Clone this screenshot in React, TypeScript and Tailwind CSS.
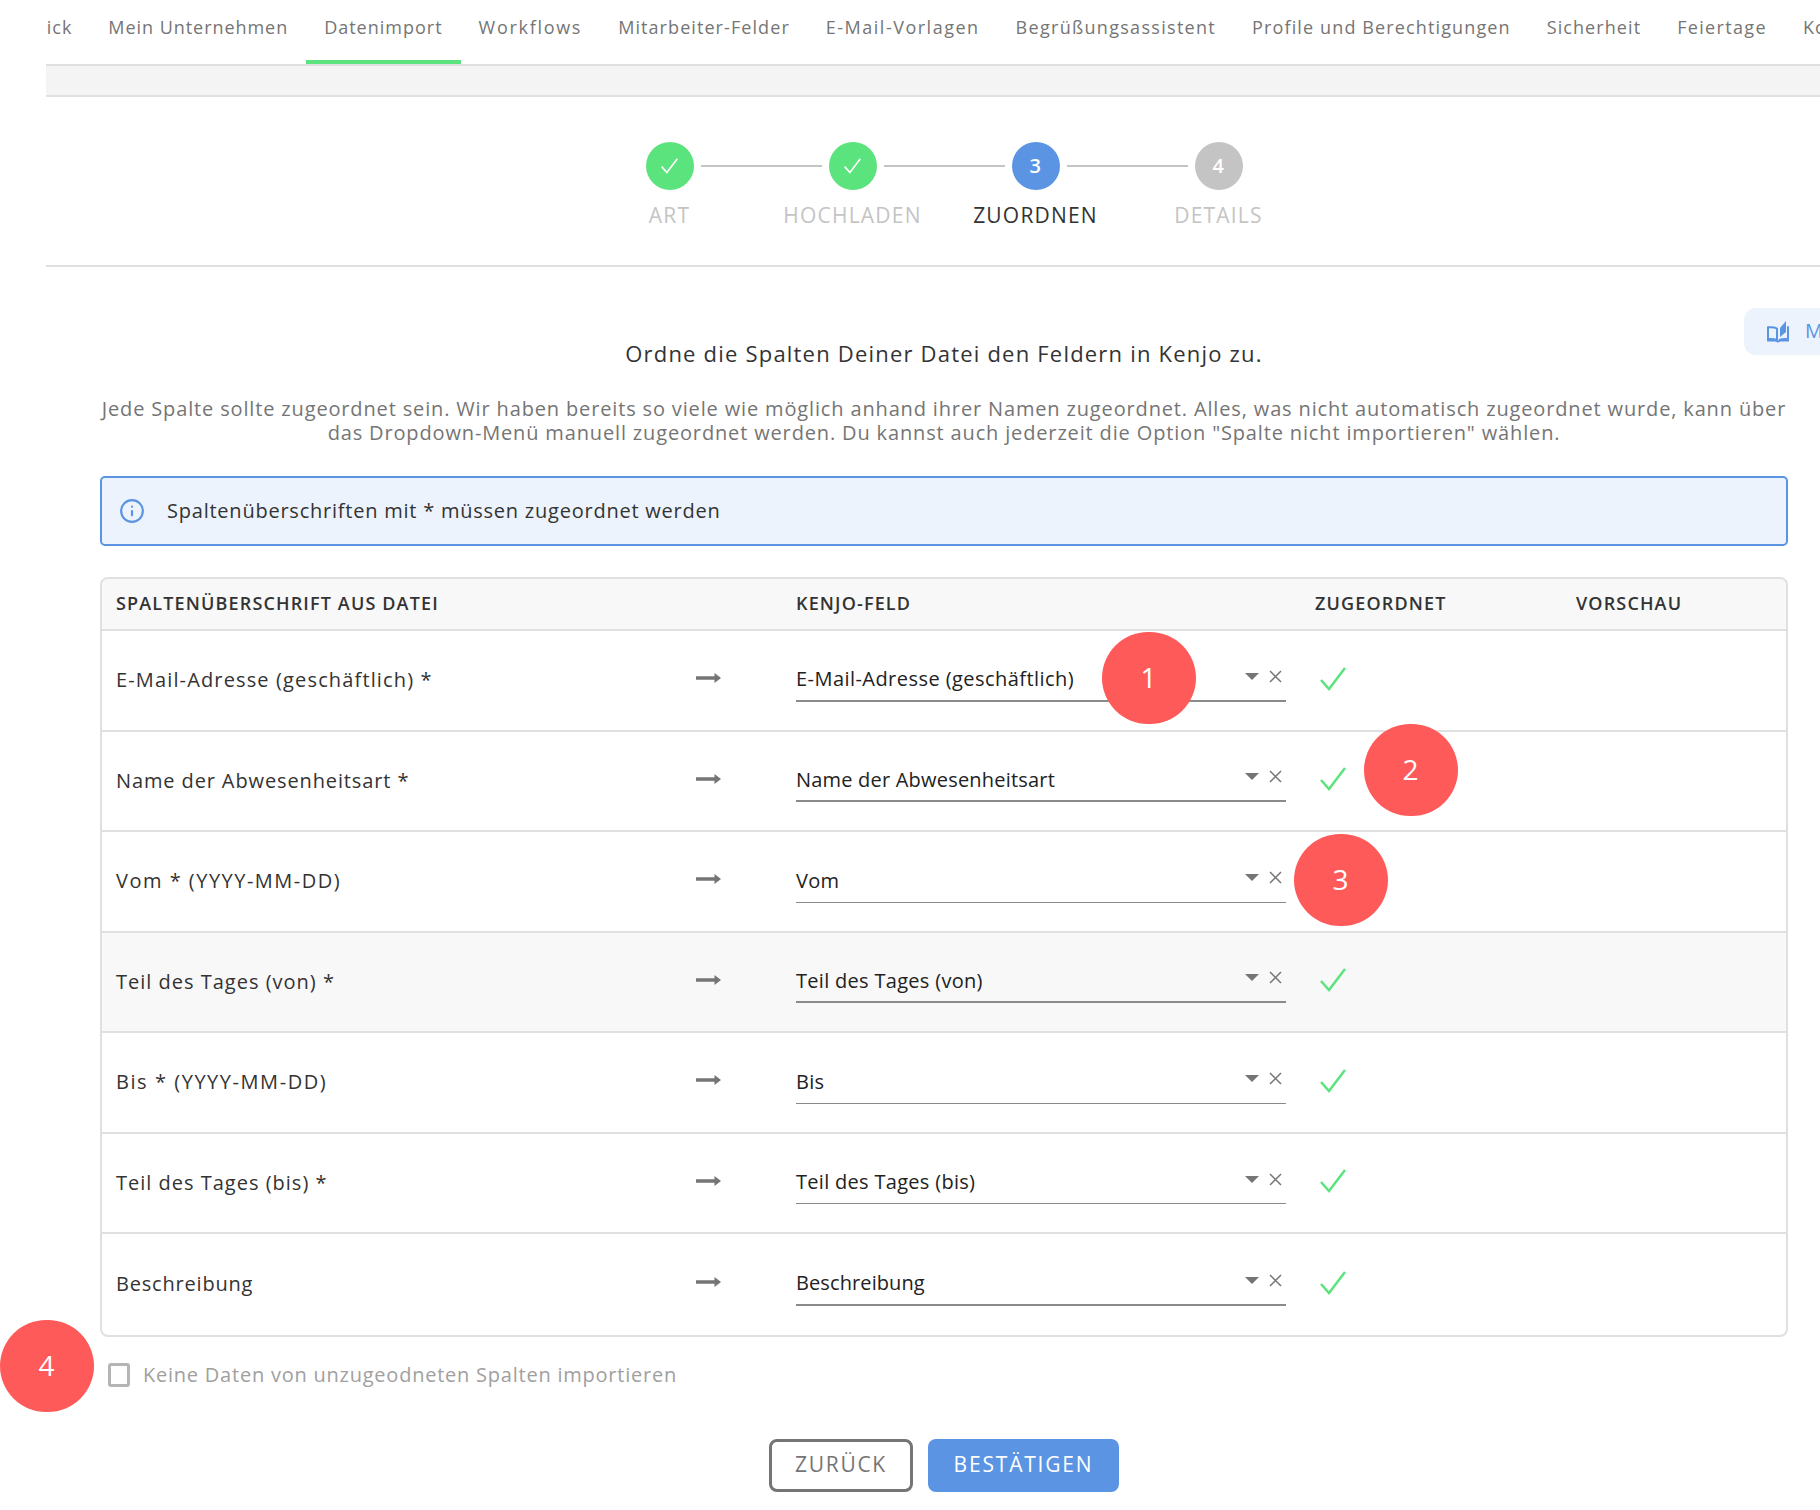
import React from 'react';
import { Info } from 'lucide-react';

const tabs = [
  { name: 'Überblick', ls: 'tracking-[0.95px]' },
  { name: 'Mein Unternehmen', ls: 'tracking-[0.95px]' },
  { name: 'Datenimport', ls: 'tracking-[1px]' },
  { name: 'Workflows', ls: 'tracking-[1.7px]' },
  { name: 'Mitarbeiter-Felder', ls: 'tracking-[1.08px]' },
  { name: 'E-Mail-Vorlagen', ls: 'tracking-[1.5px]' },
  { name: 'Begrüßungsassistent', ls: 'tracking-[1.3px]' },
  { name: 'Profile und Berechtigungen', ls: 'tracking-[1.13px]' },
  { name: 'Sicherheit', ls: 'tracking-[1.07px]' },
  { name: 'Feiertage', ls: 'tracking-[1.34px]' },
  { name: 'Kontakte', ls: 'tracking-[1px]' },
];

const steps = [
  { label: 'ART', state: 'done' },
  { label: 'HOCHLADEN', state: 'done' },
  { label: 'ZUORDNEN', state: 'current', num: 3 },
  { label: 'DETAILS', state: 'todo', num: 4 },
];

const rows = [
  { label: 'E-Mail-Adresse (geschäftlich) *', labelLs: 'tracking-[1.14px]', value: 'E-Mail-Adresse (geschäftlich)', valueLs: 'tracking-[0.45px]', ok: true, line: 'border-b-2' },
  { label: 'Name der Abwesenheitsart *', labelLs: 'tracking-[0.88px]', value: 'Name der Abwesenheitsart', valueLs: 'tracking-[0.2px]', ok: true, line: 'border-b-2' },
  { label: 'Vom * (YYYY-MM-DD)', labelLs: 'tracking-[1.49px]', value: 'Vom', valueLs: 'tracking-[0.3px]', ok: false, line: 'border-b' },
  { label: 'Teil des Tages (von) *', labelLs: 'tracking-[1px]', value: 'Teil des Tages (von)', valueLs: 'tracking-[0.3px]', ok: true, line: 'border-b-2', hover: true },
  { label: 'Bis * (YYYY-MM-DD)', labelLs: 'tracking-[1.55px]', value: 'Bis', valueLs: 'tracking-[0.3px]', ok: true, line: 'border-b' },
  { label: 'Teil des Tages (bis) *', labelLs: 'tracking-[1px]', value: 'Teil des Tages (bis)', valueLs: 'tracking-[0.3px]', ok: true, line: 'border-b' },
  { label: 'Beschreibung', labelLs: 'tracking-[0.8px]', value: 'Beschreibung', valueLs: 'tracking-[0.1px]', ok: true, line: 'border-b-2' },
];

function Arrow() {
  return (
    <svg width="25" height="12" viewBox="0 0 25 12" fill="#757575">
      <path d="M0 4.3h18.5V1l6.5 5-6.5 5V7.7H0z" />
    </svg>
  );
}

function Tick({ className }: { className: string }) {
  return (
    <svg className={className} viewBox="0 0 26 24" fill="none" stroke="currentColor" strokeWidth="2.5">
      <path d="M1 13l8 9L25 1" />
    </svg>
  );
}

function BookIcon() {
  return (
    <svg className="mb-[2px]" width="24" height="24" viewBox="0 0 24 24" fill="none" stroke="currentColor" strokeWidth="2">
      <path d="M11 9.5C9 8.3 5.5 8 2 8.3V20c3.5-.3 7 0 9 1.2zM21 8.3h1V20c-3.5-.3-7 0-9 1.2" />
      <path d="M1 21.5h8.5c1 0 1.5 1 2.5 1s1.5-1 2.5-1H23" />
      <path d="M14 18V9l6-7v11z" fill="currentColor" stroke="none" />
    </svg>
  );
}

function Marker({ n, className }: { n: number; className: string }) {
  return (
    <div className={`absolute flex h-[92px] w-[94px] items-center justify-center rounded-full bg-[#ff5a5a] pb-[2px] text-[28px] text-white ${className}`}>
      {n}
    </div>
  );
}

export default function App() {
  return (
    <div className="relative h-[1510px] overflow-hidden bg-white pl-[46px] font-['Open_Sans',sans-serif] tracking-[0.77px] text-[#333]">
      {/* Tabs */}
      <div className="flex h-[66px] overflow-hidden border-b-2 border-[#e0e0e0]">
        <div className="ml-[-80px] flex shrink-0">
          {tabs.map((t) => (
            <div
              key={t.name}
              className={`shrink-0 border-b-4 px-[18px] pt-[15px] text-[18px] leading-[24px] text-[#757575] ${t.ls} ${t.name === 'Datenimport' ? 'border-[#5be37d]' : 'border-transparent'}`}
            >
              {t.name}
            </div>
          ))}
        </div>
      </div>
      <div className="h-[31px] border-b-2 border-[#e0e0e0] bg-[#f4f4f4]" />

      {/* Stepper */}
      <div className="flex h-[170px] justify-center border-b-2 border-[#e0e0e0] pl-[22px] pt-[45px]">
        {steps.map((s, i) => (
          <React.Fragment key={s.label}>
            <div className="flex w-[48px] flex-col items-center">
              <div
                className={`flex h-[48px] w-[48px] shrink-0 items-center justify-center rounded-full text-[20px] font-semibold text-white ${s.state === 'done' ? 'bg-[#5be37d]' : s.state === 'current' ? 'bg-[#5a94e3]' : 'bg-[#c4c4c4]'}`}
              >
                {s.state === 'done' ? <Tick className="h-[16px] w-[17px]" /> : s.num}
              </div>
              <div className={`mt-[12px] whitespace-nowrap text-[21px] leading-[26px] tracking-[1.2px] ${s.state === 'current' ? 'text-[#333]' : 'text-[#c4c4c4]'}`}>
                {s.label}
              </div>
            </div>
            {i < steps.length - 1 && <div className="mx-[7px] mt-[23px] h-[2px] w-[121px] bg-[#c4c4c4]" />}
          </React.Fragment>
        ))}
      </div>

      {/* Main */}
      <div className="relative pl-[54px] pr-[32px]">
        <div className="absolute right-[-70px] top-[41px] flex h-[47px] w-[146px] items-center rounded-l-[12px] bg-[#ecf3fc] pl-[22px] text-[20px] text-[#5a94e3]">
          <BookIcon />
          <span className="mb-[2px] ml-[15px]">Mehr</span>
        </div>

        <div className="pt-[71px] text-center text-[22px] leading-[30px] tracking-[1.2px] text-[#333]">Ordne die Spalten Deiner Datei den Feldern in Kenjo zu.</div>
        <div className="mt-[29px] -mx-[4px] text-center text-[20px] leading-[24px] tracking-[0.85px] text-[#757575]">
          Jede Spalte sollte zugeordnet sein. Wir haben bereits so viele wie möglich anhand ihrer Namen zugeordnet. Alles, was nicht automatisch zugeordnet wurde, kann über das Dropdown-Menü manuell zugeordnet werden. Du kannst auch jederzeit die Option "Spalte nicht importieren" wählen.
        </div>

        <div className="mt-[31px] flex h-[70px] items-center rounded-[5px] border-2 border-[#5a94e3] bg-[#ecf3fc] pl-[17px] text-[20px]">
          <Info className="h-[26px] w-[26px] text-[#5a94e3]" strokeWidth={2} />
          <span className="ml-[22px]">Spaltenüberschriften mit * müssen zugeordnet werden</span>
        </div>

        {/* Mapping table */}
        <div className="mt-[31px] overflow-hidden rounded-[8px] border-2 border-[#e0e0e0]">
          <div className="grid h-[52px] grid-cols-[579px_101px_490px_29px_261px_1fr] items-center border-b-2 border-[#e0e0e0] bg-[#f8f8f8] pb-[2px] pl-[14px] text-[18px] font-semibold tracking-[1.15px] text-[#333]">
            <div>SPALTENÜBERSCHRIFT AUS DATEI</div>
            <div />
            <div>KENJO-FELD</div>
            <div />
            <div>ZUGEORDNET</div>
            <div>VORSCHAU</div>
          </div>
          {rows.map((r, i) => (
            <div
              key={r.label}
              className={`grid h-[100.5px] grid-cols-[579px_101px_490px_29px_261px_1fr] items-center pl-[14px] text-[20px] ${i < rows.length - 1 ? 'border-b-2 border-[#e0e0e0]' : ''} ${r.hover ? 'bg-[#f8f8f8]' : ''}`}
            >
              <div className={r.labelLs}>{r.label}</div>
              <div className="pb-[4px] pl-[1px]"><Arrow /></div>
              <div className={`flex h-[43px] items-center justify-between border-[#8a8a8a] pr-[4px] text-[#222] ${r.valueLs} ${r.line}`}>
                <span>{r.value}</span>
                <span className="flex items-center gap-[10px] pb-[6px] text-[#757575]">
                  <span className="h-0 w-0 border-x-[7px] border-t-[7px] border-x-transparent border-t-[#757575]" />
                  <svg width="13" height="13" viewBox="0 0 13 13" stroke="currentColor" strokeWidth="1.5"><path d="M1 1l11 11M12 1L1 12" /></svg>
                </span>
              </div>
              <div />
              <div className="pl-[5px] pb-[3px]">{r.ok && <Tick className="h-[24px] w-[26px] text-[#5be37d]" />}</div>
              <div />
            </div>
          ))}
        </div>

        <div className="mt-[23px] flex items-center pl-[8px]">
          <div className="h-[24px] w-[22px] rounded-[3px] border-[3px] border-[#b5b5b5]" />
          <span className="ml-[13px] text-[20px] text-[#a0a0a0]">Keine Daten von unzugeodneten Spalten importieren</span>
        </div>

        <div className="mt-[49px] flex justify-center gap-[15px]">
          <button className="flex h-[53px] w-[144px] items-center justify-center rounded-[8px] border-[3px] border-[#757575] bg-white text-[21px] tracking-[1.7px] text-[#757575]">ZURÜCK</button>
          <button className="flex h-[53px] w-[191px] items-center justify-center rounded-[8px] bg-[#5a94e3] text-[21px] tracking-[1.8px] text-white">BESTÄTIGEN</button>
        </div>
      </div>

      <Marker n={1} className="left-[1102px] top-[632px]" />
      <Marker n={2} className="left-[1364px] top-[724px]" />
      <Marker n={3} className="left-[1294px] top-[834px]" />
      <Marker n={4} className="left-0 top-[1320px]" />
    </div>
  );
}
